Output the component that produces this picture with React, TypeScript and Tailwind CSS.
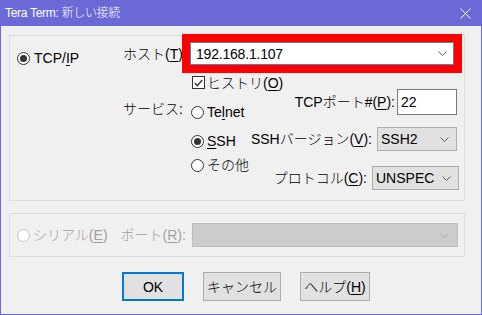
import React from 'react';

const Radio = ({ checked, disabled }: { checked?: boolean; disabled?: boolean }) => (
  <span
    className={`flex h-[13px] w-[13px] shrink-0 items-center justify-center rounded-full border bg-white ${
      disabled ? 'border-[#c4c4c4]' : 'border-[#333333]'
    }`}
  >
    {checked && <span className="h-[7px] w-[7px] rounded-full bg-[#333333]" />}
  </span>
);

const Chevron = ({ color = '#606060' }: { color?: string }) => (
  <svg width="9" height="5" viewBox="0 0 9 5" className="shrink-0">
    <path d="M0.5 0.5 L4.5 4.5 L8.5 0.5" stroke={color} fill="none" />
  </svg>
);

const U = ({ children }: { children: React.ReactNode }) => (
  <span className="underline decoration-1 underline-offset-[2px]">{children}</span>
);

const Select = ({ value, width }: { value: string; width: string }) => (
  <div
    className={`flex h-[24px] ${width} items-center justify-between border border-[#adadad] bg-[#e1e1e1] pl-[3px] pr-[7px]`}
  >
    <span>{value}</span>
    <Chevron />
  </div>
);

export default function App() {
  return (
    <div className="flex h-[315px] w-[482px] flex-col border-x border-b border-[#6b69d6] text-[14px] font-light leading-[16px] text-black [font-family:'Liberation_Sans','Noto_Sans_CJK_JP',sans-serif]">
      {/* title bar */}
      <div className="flex h-[26px] shrink-0 items-center justify-between bg-[#6b69d6] pl-[4px] pr-[10px] text-[12px] text-white">
        <span className="tracking-[-0.3px]">Tera Term: 新しい接続</span>
        <svg width="11" height="11" viewBox="0 0 11 11">
          <path d="M0.5 0.5 L10.5 10.5 M10.5 0.5 L0.5 10.5" stroke="#ffffff" strokeWidth="1" />
        </svg>
      </div>

      {/* client area */}
      <div className="flex flex-1 flex-col bg-[#f0f0f0] pl-[8px]">
        {/* TCP/IP group */}
        <div className="mt-[9px] flex h-[166px] w-[456px] border border-[#dcdcdc]">
          <div className="w-[113px] shrink-0 pl-[7px]">
            <label className="mt-[11px] flex h-[22px] items-center gap-[4px]">
              <Radio checked />
              <span>
                TCP/<U>I</U>P
              </span>
            </label>
          </div>

          <div className="w-[67px] shrink-0">
            <div className="mt-[6px] flex h-[23px] items-center">
              ホスト(<U>T</U>)
            </div>
            <div className="mt-[33px] flex h-[22px] items-center">サービス:</div>
          </div>

          <div className="flex w-[273px] flex-col">
            <div className="mt-[6px] flex h-[23px] w-[264px] items-center justify-between border border-[#5b7fb3] bg-white pl-[5px] pr-[6px] tracking-[-0.2px] outline-8 outline-[#ff0000]">
              <span>192.168.1.107</span>
              <Chevron />
            </div>

            <label className="mt-[11px] flex h-[13px] items-center gap-[2px] pl-[2px]">
              <span className="flex h-[13px] w-[13px] items-center justify-center border border-[#333333] bg-white">
                <svg width="9" height="8" viewBox="0 0 9 8">
                  <path d="M0.8 4 L3.4 6.6 L8.2 1" stroke="#333333" strokeWidth="1.4" fill="none" />
                </svg>
              </span>
              <span>
                ヒストリ(<U>O</U>)
              </span>
            </label>

            <div className="flex">
              <div className="w-[60px] shrink-0 pl-[1px]">
                <label className="mt-[12px] flex h-[22px] items-center gap-[3px]">
                  <Radio />
                  <span>
                    Te<U>l</U>net
                  </span>
                </label>
                <label className="mt-[7px] flex h-[22px] items-center gap-[3px]">
                  <Radio checked />
                  <span>
                    <U>S</U>SH
                  </span>
                </label>
                <label className="mt-[2px] flex h-[22px] items-center gap-[3px]">
                  <Radio />
                  <span>その他</span>
                </label>
              </div>

              <div className="flex flex-1 flex-col items-end pr-[6px]">
                <div className="flex h-[26px] items-center gap-[2px]">
                  <span>
                    TCPポート#(<U>P</U>):
                  </span>
                  <div className="flex h-[26px] w-[60px] items-center border border-[#7a7a7a] bg-white pl-[3px]">
                    22
                  </div>
                </div>
                <div className="mt-[12px] flex h-[24px] items-center gap-[5px]">
                  <span>
                    SSHバージョン(<U>V</U>):
                  </span>
                  <Select value="SSH2" width="w-[80px]" />
                </div>
                <div className="mr-[-2px] mt-[15px] flex h-[24px] items-center gap-[5px]">
                  <span>
                    プロトコル(<U>C</U>):
                  </span>
                  <Select value="UNSPEC" width="w-[87px]" />
                </div>
              </div>
            </div>
          </div>
        </div>

        {/* Serial group */}
        <div className="mt-[12px] flex h-[44px] w-[456px] items-center border border-[#dcdcdc] pl-[7px] text-[#a0a0a0]">
          <label className="flex items-center gap-[3px]">
            <Radio disabled />
            <span>
              シリアル(<U>E</U>)
            </span>
          </label>
          <span className="ml-[13px]">
            ポート(<U>R</U>):
          </span>
          <div className="ml-[6px] flex h-[24px] w-[266px] items-center justify-end border border-[#bfbfbf] bg-[#cccccc] pr-[8px]">
            <Chevron color="#a8a8a8" />
          </div>
        </div>

        {/* buttons */}
        <div className="ml-[113px] mt-[15px] flex gap-[19px]">
          <button className="flex h-[29px] w-[62px] items-center justify-center border-2 border-[#0078d7] bg-[#e1e1e1]">
            OK
          </button>
          <button className="flex h-[29px] w-[78px] items-center justify-center border border-[#adadad] bg-[#e1e1e1]">
            キャンセル
          </button>
          <button className="flex h-[29px] w-[70px] items-center justify-center border border-[#adadad] bg-[#e1e1e1]">
            ヘルプ(<U>H</U>)
          </button>
        </div>
      </div>
    </div>
  );
}
